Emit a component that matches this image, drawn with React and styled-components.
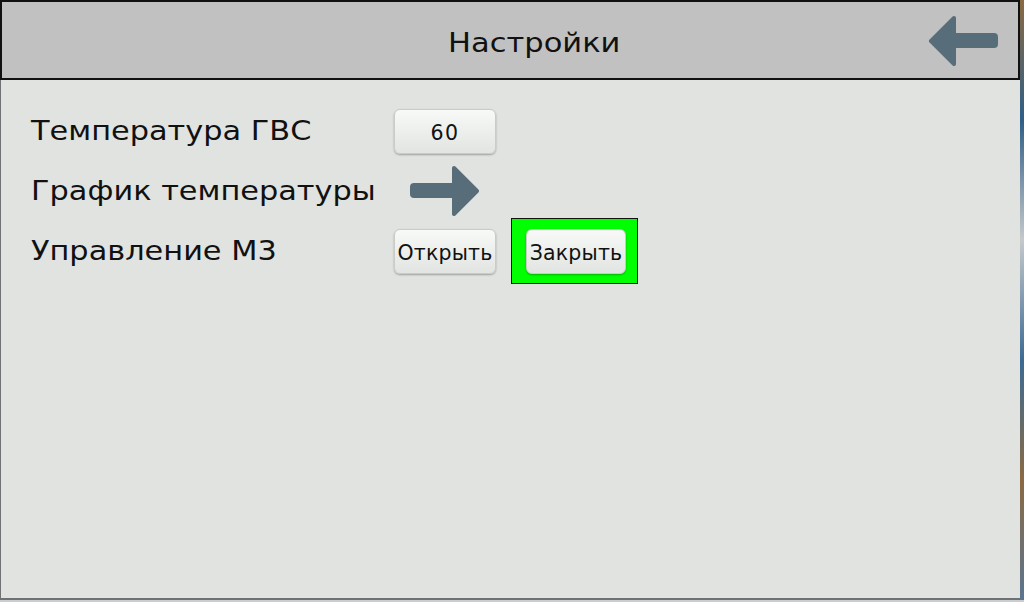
import styled, { createGlobalStyle } from 'styled-components'

const GlobalStyle = createGlobalStyle`
    html, body {
        margin: 0;
        padding: 0;
        background: #c9cdd0;
    }
    * {
        box-sizing: border-box;
    }
`;

const Page = styled.div`
    width: 1024px;
    height: 602px;
    display: flex;
    overflow: hidden;
    font-family: "DejaVu Sans", "Noto Sans", sans-serif;
    color: #111;
`;

const Screen = styled.div`
    width: 1020px;
    height: 600px;
    display: flex;
    flex-direction: column;
    background: #e0e3e0;
    border-bottom: 2px solid #6f7173;
`;

const Strip = styled.div`
    width: 4px;
    height: 600px;
    background: linear-gradient(#8a6a44 0%, #2f5e86 20%, #c5c9cc 40%, #3d6a93 60%, #8a6a44 80%, #5a7590 100%);
`;

const Header = styled.div`
    height: 80px;
    background: #c1c1c1;
    border: 2px solid #111;
    display: grid;
    grid-template-columns: 1fr auto 1fr;
    align-items: center;
`;

// the panel font is drawn a little wider than DejaVu Sans
const Title = styled.div`
    grid-column: 2;
    font-size: 27px;
    margin: 5px 0 0 48px;
    transform: scaleX(1.13);
`;

const IconButton = styled.button`
    border: none;
    background: transparent;
    padding: 0;
    margin: ${props => props.header ? "2px 20px 0 0" : "0 0 0 16px"};
    justify-self: ${props => props.header ? "end" : "start"};
    width: 70px;
    height: 50px;
    cursor: pointer;
    display: flex;
`;

const Content = styled.div`
    flex: 1;
    border-left: 1px solid #707274;
    padding: 21px 0 0 30px;
    display: grid;
    grid-template-columns: 363px 102px auto;
    grid-auto-rows: 60px;
    justify-content: start;
    align-content: start;
    align-items: center;
    justify-items: start;
`;

const Label = styled.div`
    font-size: 27px;
    padding-bottom: 1px;
    transform: scaleX(1.125);
    transform-origin: left center;
    white-space: nowrap;
`;

const Button = styled.button`
    width: ${props => props.wide ? "100px" : "102px"};
    height: 45px;
    border: 1px solid #c9ccc9;
    border-radius: 6px;
    background: linear-gradient(#f8f9f8, #eceeec 55%, #e2e4e2);
    box-shadow: 0 1px 2px rgba(0, 0, 0, 0.3);
    font-family: "DejaVu Sans", "Noto Sans", sans-serif;
    font-size: 20.5px;
    letter-spacing: ${props => props.value ? "1.5px" : "0.2px"};
    color: #111;
    padding: 3px 0 0 0;
    cursor: pointer;
    white-space: nowrap;
`;

const ActiveFrame = styled.div`
    margin-left: 15px;
    width: 127px;
    height: 66px;
    background: #00ff00;
    border: 1px solid #111;
    display: flex;
    align-items: center;
    padding: 0 0 0 14px;
`;

const Arrow = ({ left }) => (
    <svg width="70" height="50" viewBox="0 0 70 50" style={left ? { transform: 'scaleX(-1)' } : null}>
        <rect x="0" y="17" width="46" height="15" rx="4" fill="#576d79" />
        <path d="M44 2 L67 25 L44 48 Z" fill="#576d79" stroke="#576d79" strokeWidth="4" strokeLinejoin="round" />
    </svg>
);

const App = () => {
    return (
        <Page>
            <GlobalStyle />
            <Screen>
                <Header>
                    <Title>Настройки</Title>
                    <IconButton header><Arrow left /></IconButton>
                </Header>
                <Content>
                    <Label>Температура ГВС</Label>
                    <Button value>60</Button>
                    <span />

                    <Label>График температуры</Label>
                    <IconButton><Arrow /></IconButton>
                    <span />

                    <Label>Управление М3</Label>
                    <Button>Открыть</Button>
                    <ActiveFrame>
                        <Button wide>Закрыть</Button>
                    </ActiveFrame>
                </Content>
            </Screen>
            <Strip />
        </Page>
    );
}

export default App;
